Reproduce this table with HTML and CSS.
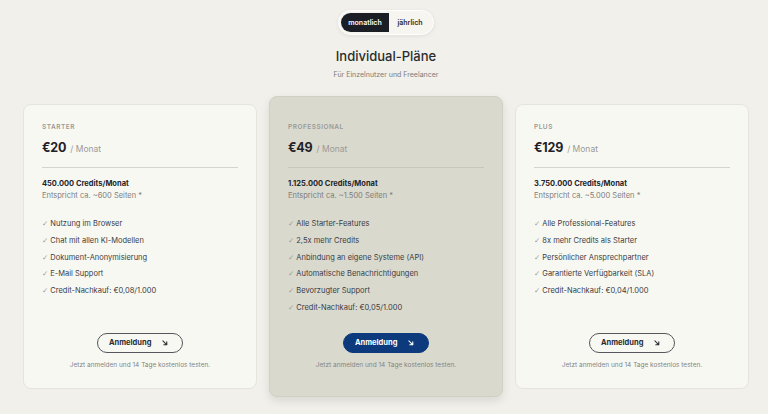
FILE: index.html
```html
<!DOCTYPE html>
<html lang="de">
<head>
<meta charset="utf-8">
<title>Individual-Pläne</title>
<link rel="stylesheet" href="styles.css">
</head>
<body>
<div class="page">
  <div class="toggle-wrap">
    <div class="toggle">
      <span class="seg seg-active">monatlich</span>
      <span class="seg">jährlich</span>
    </div>
  </div>
  <h1 class="title">Individual-Pläne</h1>
  <p class="subtitle">Für Einzelnutzer und Freelancer</p>

  <div class="cards">
    <div class="card">
      <div class="label">STARTER</div>
      <div class="price"><span class="amount">€20</span><span class="per">/ Monat</span></div>
      <div class="divider"></div>
      <div class="credits">450.000 Credits/Monat</div>
      <div class="pages">Entspricht ca. ~600 Seiten *</div>
      <ul class="features">
        <li><span class="check">✓</span>Nutzung im Browser</li>
        <li><span class="check">✓</span>Chat mit allen KI-Modellen</li>
        <li><span class="check">✓</span>Dokument-Anonymisierung</li>
        <li><span class="check">✓</span>E-Mail Support</li>
        <li><span class="check">✓</span>Credit-Nachkauf: €0,08/1.000</li>
      </ul>
      <a class="btn">Anmeldung<svg class="arrow" viewBox="0 0 8 8" width="6" height="6"><path d="M1.2 1.2 L6.4 6.4 M6.4 2.4 V6.4 H2.4" fill="none" stroke="currentColor" stroke-width="1.4" stroke-linecap="round" stroke-linejoin="round"/></svg></a>
      <p class="note">Jetzt anmelden und 14 Tage kostenlos testen.</p>
    </div>

    <div class="card card-featured">
      <div class="label">PROFESSIONAL</div>
      <div class="price"><span class="amount">€49</span><span class="per">/ Monat</span></div>
      <div class="divider"></div>
      <div class="credits">1.125.000 Credits/Monat</div>
      <div class="pages">Entspricht ca. ~1.500 Seiten *</div>
      <ul class="features">
        <li><span class="check">✓</span>Alle Starter-Features</li>
        <li><span class="check">✓</span>2,5x mehr Credits</li>
        <li><span class="check">✓</span>Anbindung an eigene Systeme (API)</li>
        <li><span class="check">✓</span>Automatische Benachrichtigungen</li>
        <li><span class="check">✓</span>Bevorzugter Support</li>
        <li><span class="check">✓</span>Credit-Nachkauf: €0,05/1.000</li>
      </ul>
      <a class="btn btn-primary">Anmeldung<svg class="arrow" viewBox="0 0 8 8" width="6" height="6"><path d="M1.2 1.2 L6.4 6.4 M6.4 2.4 V6.4 H2.4" fill="none" stroke="currentColor" stroke-width="1.4" stroke-linecap="round" stroke-linejoin="round"/></svg></a>
      <p class="note">Jetzt anmelden und 14 Tage kostenlos testen.</p>
    </div>

    <div class="card">
      <div class="label">PLUS</div>
      <div class="price"><span class="amount">€129</span><span class="per">/ Monat</span></div>
      <div class="divider"></div>
      <div class="credits">3.750.000 Credits/Monat</div>
      <div class="pages">Entspricht ca. ~5.000 Seiten *</div>
      <ul class="features">
        <li><span class="check">✓</span>Alle Professional-Features</li>
        <li><span class="check">✓</span>8x mehr Credits als Starter</li>
        <li><span class="check">✓</span>Persönlicher Ansprechpartner</li>
        <li><span class="check">✓</span>Garantierte Verfügbarkeit (SLA)</li>
        <li><span class="check">✓</span>Credit-Nachkauf: €0,04/1.000</li>
      </ul>
      <a class="btn">Anmeldung<svg class="arrow" viewBox="0 0 8 8" width="6" height="6"><path d="M1.2 1.2 L6.4 6.4 M6.4 2.4 V6.4 H2.4" fill="none" stroke="currentColor" stroke-width="1.4" stroke-linecap="round" stroke-linejoin="round"/></svg></a>
      <p class="note">Jetzt anmelden und 14 Tage kostenlos testen.</p>
    </div>
  </div>
</div>
</body>
</html>
```

FILE: styles.css
```css
* { box-sizing: border-box; }

html, body {
  margin: 0;
  padding: 0;
  background: #f1f0ea;
  font-family: Inter, "Noto Sans", "Liberation Sans", sans-serif;
  color: #1d1f24;
}

body {
  height: 414px;
  overflow: hidden;
}

.page {
  width: 726px;
  margin-left: 23px;
  padding-top: 10px;
}

.toggle-wrap {
  display: flex;
  justify-content: center;
}

.toggle {
  display: flex;
  height: 25px;
  padding: 2px;
  border-radius: 13px;
  background: #f6f5f0;
  border: 1px solid #ffffff;
  box-shadow: 0 1px 4px rgba(0, 0, 0, 0.08);
}

.seg {
  display: flex;
  align-items: center;
  justify-content: center;
  height: 19px;
  font-size: 7px;
  font-weight: 600;
  color: #2a2c32;
  padding: 0 5px;
  width: 42px;
}

.seg-active {
  width: 48px;
  background: #1b1e25;
  color: #ffffff;
  border-radius: 10px 0 0 10px;
}

.title {
  margin: 12px 0 0;
  text-align: center;
  font-size: 13px;
  line-height: 18px;
  font-weight: 500;
  color: #2a2c31;
}

.subtitle {
  margin: 5px 0 0;
  text-align: center;
  font-size: 7px;
  line-height: 10px;
  color: #7d7d7a;
}

.cards {
  margin-top: 24px;
  display: grid;
  grid-template-columns: repeat(3, 234px);
  gap: 12px;
  align-items: stretch;
}

.card {
  display: flex;
  flex-direction: column;
  background: #f8f8f3;
  border: 1px solid #e6e5dd;
  border-radius: 8px;
  padding: 17px 18px 18px;
}

.card-featured {
  margin: -8px 0;
  padding: 25px 18px 26px;
  background: #dad9ce;
  border-color: #d1d0c5;
  box-shadow: 0 4px 10px rgba(0, 0, 0, 0.10);
}

.label {
  font-size: 6.5px;
  line-height: 10px;
  font-weight: 600;
  letter-spacing: 0.5px;
  color: #9a9a96;
}

.price {
  margin-top: 8px;
  height: 16px;
  display: flex;
  align-items: baseline;
  gap: 4px;
}

.amount {
  font-size: 12.5px;
  line-height: 16px;
  font-weight: 700;
  color: #1f2127;
  letter-spacing: -0.2px;
}

.per {
  font-size: 8.5px;
  color: #9a9a96;
}

.divider {
  margin-top: 11px;
  height: 1px;
  background: #d6d5cd;
}

.card-featured .divider {
  background: #c8c7bc;
}

.credits {
  margin-top: 10px;
  font-size: 7.5px;
  line-height: 12px;
  font-weight: 700;
  color: #23252b;
}

.pages {
  font-size: 7.5px;
  line-height: 12px;
  color: #7d7d7a;
}

.features {
  list-style: none;
  margin: 14px 0 16px;
  padding: 0;
}

.features li {
  font-size: 7.5px;
  line-height: 16.8px;
  color: #3a3c42;
  white-space: nowrap;
}

.check {
  font-family: "DejaVu Sans", sans-serif;
  color: #9d9d98;
  font-size: 7.5px;
  margin-right: 2px;
}

.btn {
  margin-top: auto;
  align-self: center;
  width: 86px;
  height: 20px;
  border: 1px solid #55575c;
  border-radius: 10px;
  display: flex;
  align-items: center;
  justify-content: space-between;
  padding: 0 14px 0 11px;
  font-size: 7.5px;
  font-weight: 700;
  color: #2a2c33;
}

.btn-primary {
  background: #0c3a7c;
  border-color: #0c3a7c;
  color: #ffffff;
}

.arrow {
  display: block;
}

.note {
  margin: 7px 0 0;
  text-align: center;
  font-size: 6.5px;
  line-height: 10px;
  color: #85857f;
}
```
